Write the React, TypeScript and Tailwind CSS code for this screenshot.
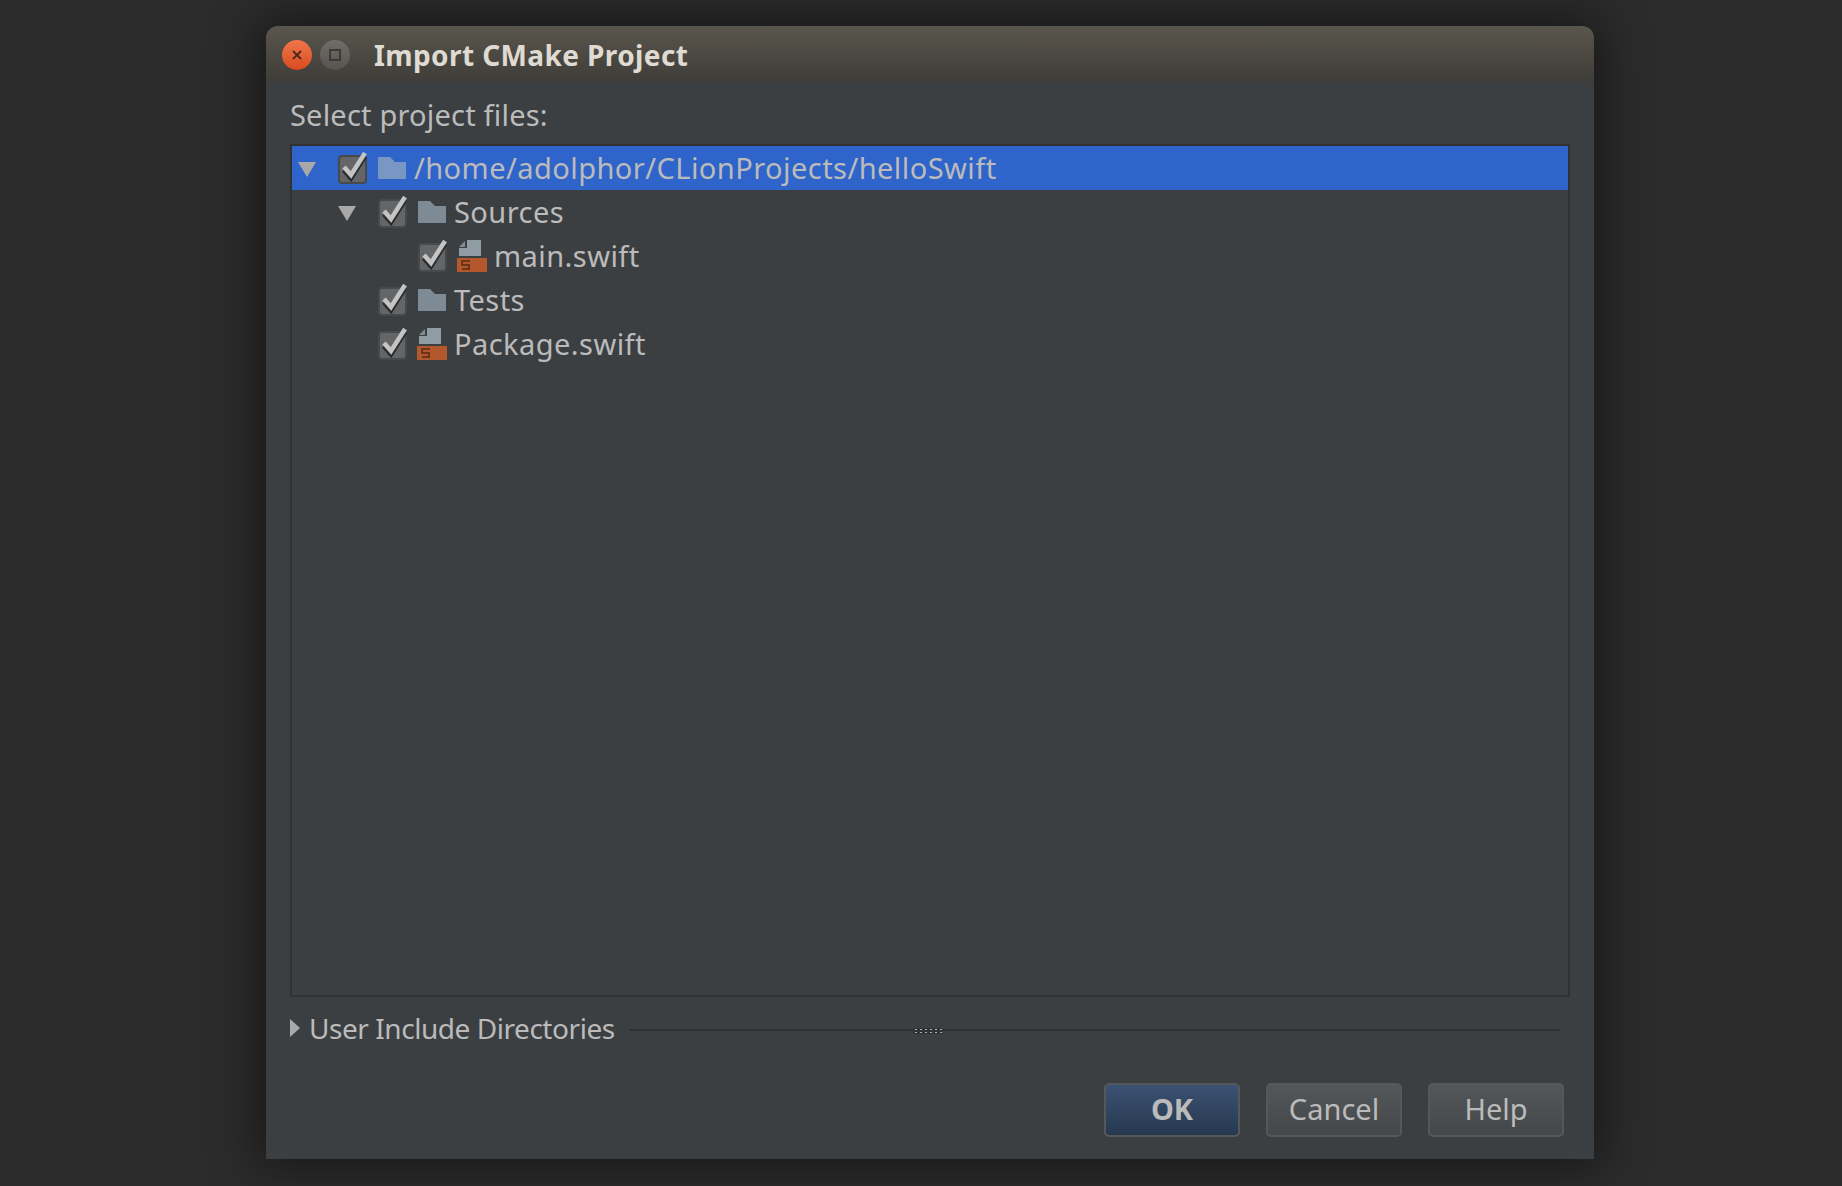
const rowFont = "font-['Noto_Sans',sans-serif]";

function Arrow({ className = "" }: { className?: string }) {
  return (
    <svg width="18" height="15" viewBox="0 0 18 15" className={className}>
      <path d="M0 0H18L9 15Z" fill="#a9a9a9" />
    </svg>
  );
}

function CheckBox() {
  return (
    <svg width="30" height="32" viewBox="0 0 30 32" className="shrink-0">
      <rect x="1" y="4" width="27" height="27" rx="3" fill="#646567" stroke="#47494b" strokeWidth="2" />
      <path d="M6 15L13 23L27 1" fill="none" stroke="#2a2b2c" strokeWidth="5" transform="translate(0 3)" />
      <path d="M6 15L13 23L27 1" fill="none" stroke="#c4c4c4" strokeWidth="4.5" />
    </svg>
  );
}

function FolderIcon({ selected = false }: { selected?: boolean }) {
  return (
    <svg width="28" height="22" viewBox="0 0 28 22" className="shrink-0">
      <path d="M0 0H12L17 5H28V22H0Z" fill={selected ? "#7a96c2" : "#7e8b94"} />
    </svg>
  );
}

function SwiftFileIcon() {
  return (
    <svg width="30" height="32" viewBox="0 0 30 32" className="shrink-0">
      <path d="M10 0H24V16H2V8H10Z" fill="#8f9ca3" />
      <path d="M2 7L8 1V7Z" fill="#7e8b94" />
      <rect x="0" y="18" width="30" height="14" fill="#b3582d" />
      <path d="M13 21H5V25H12V29H5" fill="none" stroke="#6e3518" strokeWidth="2" />
    </svg>
  );
}

function Row({
  depth,
  label,
  icon,
  open = false,
  selected = false,
}: {
  depth: number;
  label: string;
  icon: "folder" | "swift";
  open?: boolean;
  selected?: boolean;
}) {
  const pad = depth === 0 ? "pl-[6px]" : depth === 1 ? "pl-[46px]" : "pl-[126px]";
  return (
    <div className={`flex h-[44px] items-center ${pad} ${selected ? "bg-[#2f65ca]" : ""}`}>
      {depth < 2 && (
        <div className="w-[40px] shrink-0">{open && <Arrow className="mt-[2px]" />}</div>
      )}
      <CheckBox />
      <div className="ml-[10px] flex w-[28px] shrink-0 justify-center">
        {icon === "folder" ? <FolderIcon selected={selected} /> : <SwiftFileIcon />}
      </div>
      <span
        className={`mb-[2px] ml-[8px] text-[29px] leading-none tracking-[0.45px] text-[#bbbbbb] ${rowFont}`}
      >
        {label}
      </span>
    </div>
  );
}

function DialogButton({ label, primary = false }: { label: string; primary?: boolean }) {
  return (
    <button
      className={`flex h-[54px] w-[136px] items-center justify-center rounded-[5px] border-2 border-[#55585a] pb-[2px] text-[29px] text-[#bbbbbb] ${rowFont} ${
        primary
          ? "bg-gradient-to-b from-[#3c5273] to-[#263850] font-bold"
          : "bg-gradient-to-b from-[#54575a] to-[#45484a]"
      }`}
    >
      {label}
    </button>
  );
}

export default function App() {
  return (
    <div className="h-[1186px] overflow-hidden bg-[#2c2c2c] pl-[266px] pt-[26px]">
      <div className="flex h-[1133px] w-[1328px] flex-col rounded-t-[12px] bg-[#3c3f41] shadow-[0_0_50px_10px_rgba(0,0,0,0.45)]">
        {/* Title bar */}
        <div className="flex h-[56px] shrink-0 items-center rounded-t-[12px] bg-gradient-to-b from-[#5a564d] to-[#3f3d39] pl-[16px] pt-[2px]">
          <div className="flex h-[30px] w-[30px] items-center justify-center rounded-full bg-gradient-to-b from-[#f0764a] to-[#d94a1e]">
            <svg width="10" height="10" viewBox="0 0 10 10">
              <path d="M1 1L9 9M9 1L1 9" stroke="#4a2a1c" strokeWidth="1.8" />
            </svg>
          </div>
          <div className="ml-[8px] flex h-[30px] w-[30px] items-center justify-center rounded-full bg-gradient-to-b from-[#6f6e69] to-[#555450]">
            <div className="h-[12px] w-[12px] border-2 border-[#3b3a37]" />
          </div>
          <span
            className={`ml-[24px] text-[28px] font-bold leading-none tracking-[0.4px] text-[#dfdbd2] ${rowFont}`}
          >
            Import CMake Project
          </span>
        </div>

        <div className="flex flex-1 flex-col px-[24px]">
          <div className={`mt-[15px] text-[29px] leading-[36px] tracking-[0.2px] text-[#bbbbbb] ${rowFont}`}>
            Select project files:
          </div>

          {/* Tree */}
          <div className="mt-[11px] h-[853px] w-[1280px] border-2 border-[#2f3133]">
            <Row depth={0} label="/home/adolphor/CLionProjects/helloSwift" icon="folder" open selected />
            <Row depth={1} label="Sources" icon="folder" open />
            <Row depth={2} label="main.swift" icon="swift" />
            <Row depth={1} label="Tests" icon="folder" />
            <Row depth={1} label="Package.swift" icon="swift" />
          </div>

          {/* Collapsed section */}
          <div className="mt-[14px] flex h-[34px] items-center">
            <svg width="10" height="18" viewBox="0 0 10 18" className="shrink-0">
              <path d="M0 0L10 9L0 18Z" fill="#a9a9a9" />
            </svg>
            <span
              className={`ml-[9px] w-[306px] shrink-0 whitespace-nowrap text-[28px] leading-none tracking-[-0.45px] text-[#bbbbbb] ${rowFont}`}
            >
              User Include Directories
            </span>
            <div className="ml-[15px] mt-[3px] flex h-[2px] w-[930px] shrink-0 items-center bg-[#2f3133] pl-[283px]">
              <div className="mt-[3px] h-[6px] w-[29px] bg-[radial-gradient(#b0b0b0_1px,#2f3133_1px)] bg-[length:5px_3px]" />
            </div>
          </div>

          {/* Buttons */}
          <div className="mt-[38px] flex justify-end gap-[26px] pr-[6px]">
            <DialogButton label="OK" primary />
            <DialogButton label="Cancel" />
            <DialogButton label="Help" />
          </div>
        </div>
      </div>
    </div>
  );
}
